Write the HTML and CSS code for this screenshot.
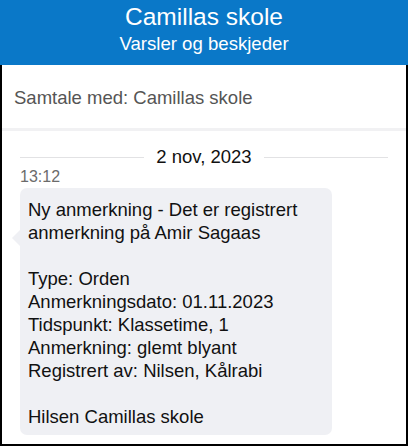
FILE: index.html
```html
<!DOCTYPE html>
<html lang="no">
<head>
<meta charset="utf-8">
<link rel="stylesheet" href="styles.css">
</head>
<body>
<header class="topbar">
  <div class="title">Camillas skole</div>
  <div class="subtitle">Varsler og beskjeder</div>
</header>
<main class="frame">
  <div class="convo">Samtale med: Camillas skole</div>
  <div class="thread">
    <div class="date-row"><span class="line"></span><span class="date">2 nov, 2023</span><span class="line"></span></div>
    <div class="time">13:12</div>
    <div class="bubble">
      <p>Ny anmerkning - Det er registrert anmerkning på Amir Sagaas</p>
      <p>Type: Orden<br>Anmerkningsdato: 01.11.2023<br>Tidspunkt: Klassetime, 1<br>Anmerkning: glemt blyant<br>Registrert av: Nilsen, Kålrabi</p>
      <p>Hilsen Camillas skole</p>
    </div>
  </div>
</main>
</body>
</html>
```
FILE: styles.css
```css
html, body {
  margin: 0;
  padding: 0;
  background: #fff;
}
body {
  width: 408px;
  height: 446px;
  overflow: hidden;
  font-family: "Liberation Sans", Arial, sans-serif;
  display: flex;
  flex-direction: column;
}
.topbar {
  background: #0a78c8;
  color: #fff;
  height: 65px;
  display: flex;
  flex-direction: column;
  align-items: center;
  box-sizing: border-box;
  padding-top: 2px;
}
.title {
  font-size: 24.5px;
  line-height: 29px;
}
.subtitle {
  font-size: 18.6px;
  line-height: 26px;
}
.frame {
  flex: 1;
  border: 2px solid #000;
  border-top: none;
  display: flex;
  flex-direction: column;
}
.convo {
  height: 66px;
  box-sizing: border-box;
  border-bottom: 3px solid #f1f1f3;
  padding-left: 12px;
  padding-top: 3px;
  display: flex;
  align-items: center;
  font-size: 18.5px;
  color: #555;
}
.thread {
  padding: 14px 18px 0 18px;
}
.date-row {
  display: flex;
  align-items: center;
  gap: 12px;
  height: 24px;
}
.line {
  flex: 1;
  height: 1px;
  background: #e2e2e4;
}
.date {
  font-size: 18.5px;
  color: #111;
}
.time {
  font-size: 16px;
  color: #6b6b6b;
  line-height: 16px;
}
.bubble {
  position: relative;
  margin-top: 3px;
  width: 312px;
  box-sizing: border-box;
  background: #eff0f4;
  border-radius: 7px;
  padding: 10px 8px 7px 8px;
  font-size: 18.5px;
  line-height: 23px;
  color: #111;
}
.bubble::before {
  content: "";
  position: absolute;
  left: -8px;
  top: 42px;
  border-top: 8px solid transparent;
  border-bottom: 8px solid transparent;
  border-right: 8px solid #eff0f4;
}
.bubble p {
  margin: 0 0 23px 0;
}
.bubble p:last-child {
  margin-bottom: 0;
}
```
